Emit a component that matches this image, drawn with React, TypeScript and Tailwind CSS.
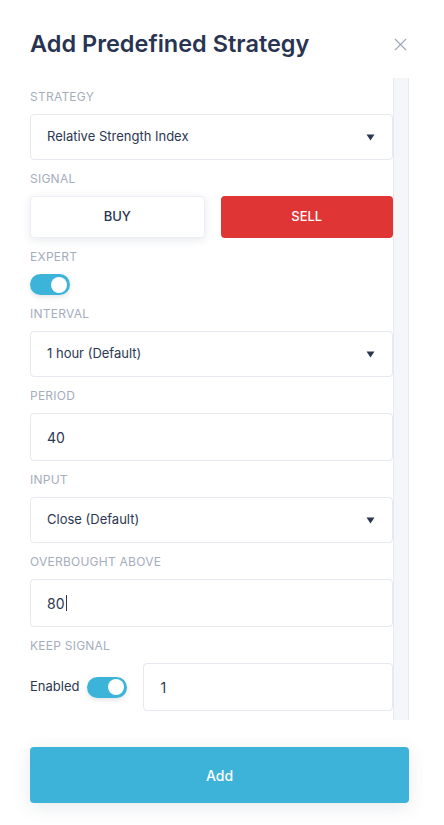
import { X } from "lucide-react";

function Label({ text }: { text: string }) {
  return (
    <div className="mt-[11px] mb-[9px] h-4 text-[12px] leading-4 tracking-[0.02em] text-[#a5adbd]">
      {text}
    </div>
  );
}

function Select({ value }: { value: string }) {
  return (
    <div className="flex h-[46px] items-center justify-between rounded-[4px] border border-[#e6e9ef] bg-white pl-4 pr-[17px] text-[13px] text-[#2c3752]">
      <span>{value}</span>
      <svg width="9" height="7" viewBox="0 0 9 7">
        <path d="M0.5 0.5 H8.5 L4.5 6.5 Z" fill="#2c3752" />
      </svg>
    </div>
  );
}

function Input({ value, caret }: { value: string; caret?: boolean }) {
  return (
    <div className="flex h-[48px] items-center rounded-[4px] border border-[#e6e9ef] bg-white px-4 text-[14px] text-[#2c3752]">
      <span>{value}</span>
      {caret && <span className="ml-[1px] inline-block h-[16px] w-[1px] bg-[#2c3752]" />}
    </div>
  );
}

function Toggle() {
  return (
    <div className="flex h-[21px] w-[40px] items-center justify-end rounded-full bg-[#3cb4da] pr-[3px] shadow-[0_2px_5px_rgba(60,70,90,0.15)]">
      <div className="h-[16px] w-[16px] rounded-full bg-white" />
    </div>
  );
}

export default function App() {
  return (
    <div
      className="h-[825px] w-[444px] overflow-hidden bg-white"
      style={{ fontFamily: "Inter, 'Noto Sans', sans-serif" }}
    >
      {/* Header */}
      <div className="flex items-center justify-between pl-[30px] pr-[33px] pt-[30px]">
        <h1 className="text-[23.5px] font-semibold leading-[28px] text-[#283451]">
          Add Predefined Strategy
        </h1>
        <X size={21} strokeWidth={1.3} className="text-[#9ea6b7]" />
      </div>

      {/* Scrollable body */}
      <div className="ml-[30px] mt-[20px] flex h-[642px] w-[379px]">
        <div className="w-[363px]">
          <Label text="STRATEGY" />
          <Select value="Relative Strength Index" />

          <Label text="SIGNAL" />
          <div className="flex h-[42px] gap-[16px]">
            <button className="flex-1 rounded-[4px] border border-[#eceef3] bg-white text-[13px] font-medium text-[#283451] shadow-[0_2px_8px_rgba(60,70,100,0.12)]">
              BUY
            </button>
            <button className="flex-1 rounded-[4px] bg-[#e03535] text-[13px] font-medium text-white">
              SELL
            </button>
          </div>

          <Label text="EXPERT" />
          <Toggle />

          <Label text="INTERVAL" />
          <Select value="1 hour (Default)" />

          <Label text="PERIOD" />
          <Input value="40" />

          <Label text="INPUT" />
          <Select value="Close (Default)" />

          <Label text="OVERBOUGHT ABOVE" />
          <Input value="80" caret />

          <Label text="KEEP SIGNAL" />
          <div className="flex items-center">
            <span className="text-[13px] text-[#2c3752]">Enabled</span>
            <div className="ml-[8px]">
              <Toggle />
            </div>
            <div className="ml-[16px] flex-1">
              <Input value="1" />
            </div>
          </div>
        </div>
        <div className="w-[16px] border-x border-[#e6e9ef] bg-[#f5f6f9]" />
      </div>

      {/* Footer */}
      <div className="pl-[30px] pt-[27px]">
        <button className="h-[56px] w-[379px] rounded-[4px] bg-[#3db3d9] text-[14px] font-medium text-white shadow-[0_4px_18px_rgba(60,70,100,0.12)]">
          Add
        </button>
      </div>
    </div>
  );
}
